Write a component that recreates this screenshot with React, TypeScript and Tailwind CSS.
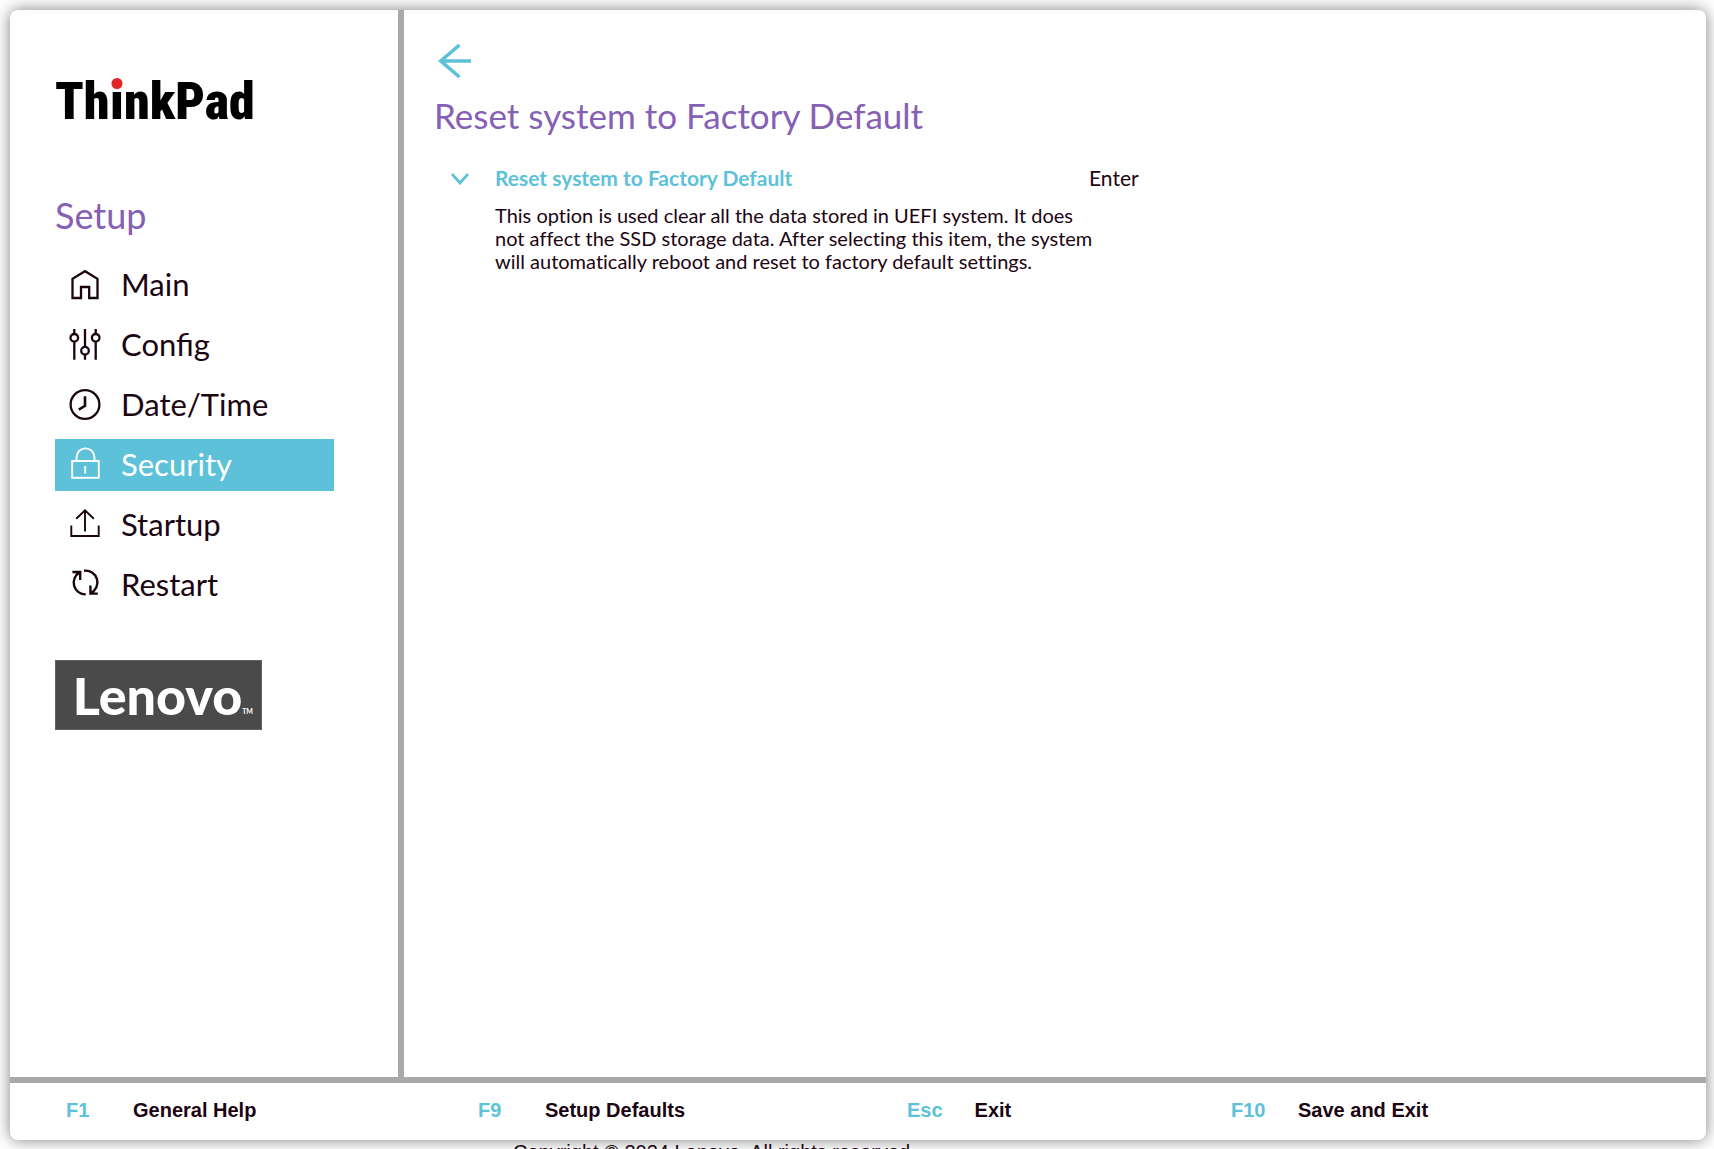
import type { ReactNode } from "react";

type NavItem = { label: string; icon: ReactNode; active?: boolean };

function Icon({ children, width = 2.3 }: { children: ReactNode; width?: number }) {
  return (
    <svg
      viewBox="0 0 32 32"
      className="mt-0.5 size-8 shrink-0 overflow-visible"
      fill="none"
      stroke="currentColor"
      strokeWidth={width}
      aria-hidden="true"
    >
      {children}
    </svg>
  );
}

const navItems: NavItem[] = [
  {
    label: "Main",
    icon: (
      <Icon>
        <path d="M3.5 29V9.8L16 2.2L28.5 9.8V29H20.2V18H12V29Z" />
      </Icon>
    ),
  },
  {
    label: "Config",
    icon: (
      <Icon>
        <path d="M5.3 0V5M5.3 12.6V30.7M16 0V17.8M16 25.6V30.7M26.7 0V5M26.7 12.6V30.7" />
        <circle cx="5.3" cy="8.8" r="3.8" />
        <circle cx="16" cy="21.7" r="3.8" />
        <circle cx="26.7" cy="8.8" r="3.8" />
      </Icon>
    ),
  },
  {
    label: "Date/Time",
    icon: (
      <Icon>
        <circle cx="16" cy="15.5" r="14.4" />
        <path d="M16 7.2V16.8L9.8 20.6" strokeWidth="2.6" />
      </Icon>
    ),
  },
  {
    label: "Security",
    active: true,
    icon: (
      <Icon width={1.9}>
        <rect x="3.2" y="12" width="26.6" height="16.8" />
        <path d="M7.5 12V8.4A9 9 0 0 1 25.5 8.4V12M16.2 17V24.5" />
      </Icon>
    ),
  },
  {
    label: "Startup",
    icon: (
      <Icon width={1.9}>
        <path d="M2.3 16.4V27H29.7V16.4M16 22.5V1.8M7.2 9.8L16 1.4L24.8 9.8" />
      </Icon>
    ),
  },
  {
    label: "Restart",
    icon: (
      <Icon width={2.4}>
        <path d="M3.4 3H11.2V11M10.6 3.4A11.8 11.8 0 0 0 16.8 25.4" />
        <path d="M28.8 24.6H21.4V16.6M15 1.8A11.8 11.8 0 0 1 21.6 24.2" />
      </Icon>
    ),
  },
];

const shortcuts = [
  { key: "F1", label: "General Help" },
  { key: "F9", label: "Setup Defaults" },
  { key: "Esc", label: "Exit" },
  { key: "F10", label: "Save and Exit" },
];

function ThinkPadLogo() {
  return (
    <div className="flex h-16 items-center pt-2 font-['Roboto_Condensed','Roboto',sans-serif] text-[52px] leading-none font-black text-black">
      <span>Th</span>
      <span className="relative">
        ı
        <span className="absolute top-0.5 left-1/2 size-[11px] -translate-x-1/2 rounded-full bg-[#e22526]" />
      </span>
      <span>nkPad</span>
    </div>
  );
}

function LenovoLogo() {
  return (
    <div className="flex h-[70px] w-[207px] items-center justify-end border border-[#616161] bg-[#4a4a4a] pr-2 font-['Lato',sans-serif] text-white">
      <span className="text-[52px] leading-none font-black">Lenovo</span>
      <span className="mt-8 text-[7px] leading-none font-bold">TM</span>
    </div>
  );
}

function Sidebar() {
  return (
    <aside className="w-[394px] shrink-0 border-r-6 border-[#a9a9a9] pt-14 pr-16 pl-[45px]">
      <ThinkPadLogo />
      <h1 className="mt-[61px] text-[36px] leading-[48px] text-[#8560b4]">Setup</h1>
      <nav className="mt-5 flex flex-col gap-2" aria-label="Setup">
        {navItems.map((item) => (
          <button
            key={item.label}
            type="button"
            aria-current={item.active ? "page" : undefined}
            className={
              item.active
                ? "flex h-[52px] items-center gap-5 bg-[#5ec1da] px-3.5 pb-0.5 text-left text-[31px] text-white"
                : "flex h-[52px] items-center gap-5 px-3.5 pb-0.5 text-left text-[31px]"
            }
          >
            {item.icon}
            {item.label}
          </button>
        ))}
      </nav>
      <div className="mt-[49px]">
        <LenovoLogo />
      </div>
    </aside>
  );
}

function Content() {
  return (
    <main className="min-w-0 flex-1 pt-[34px] pr-8 pl-[30px]">
      <button type="button" aria-label="Back" className="block px-1 text-[#5ec1da]">
        <svg viewBox="0 0 34 34" className="size-[34px]" fill="none" stroke="currentColor" strokeWidth="3.6">
          <path d="M33 17H3M21.5 1L2.8 17L21.5 33" />
        </svg>
      </button>
      <h2 className="mt-3.5 text-[35px] leading-[46px] text-[#8560b4]">Reset system to Factory Default</h2>
      <div className="mt-[26px] grid grid-cols-[61px_594px_1fr] text-[21px] leading-7">
        <button type="button" aria-label="Collapse" className="flex h-7 items-center pt-0.5 pl-[17px] text-[#5ec1da]">
          <svg viewBox="0 0 18 12" className="h-3 w-[18px]" fill="none" stroke="currentColor" strokeWidth="2.8">
            <path d="M1 1L9 10L17 1" />
          </svg>
        </button>
        <h3 className="font-bold text-[#5ec1da]">Reset system to Factory Default</h3>
        <button type="button" className="text-left leading-6">
          Enter
        </button>
        <p className="col-span-2 col-start-2 mt-3 max-w-[608px] text-[20px] leading-[23px] [font-variant-ligatures:none]">
          This option is used clear all the data stored in UEFI system. It does not affect the SSD storage data. After
          selecting this item, the system will automatically reboot and reset to factory default settings.
        </p>
      </div>
    </main>
  );
}

export default function App() {
  return (
    <div className="h-screen overflow-hidden bg-white px-2 pt-2.5 font-['Lato',sans-serif] text-[#1c0512]">
      <div className="ml-0.5 flex h-[calc(100vh-19px)] flex-col overflow-hidden rounded-lg bg-white shadow-[0_0_16px_rgba(0,0,0,0.5)]">
        <div className="flex min-h-0 flex-1">
          <Sidebar />
          <Content />
        </div>
        <footer className="grid h-[63px] shrink-0 grid-cols-[412px_429px_324px_1fr] items-center border-t-6 border-[#a9a9a9] pb-1 pl-14 font-['Liberation_Sans',sans-serif] text-[20px] font-bold">
          {shortcuts.map((s) => (
            <button key={s.key} type="button" className="flex items-center text-left">
              <span className="min-w-[67px] pr-8 text-[#5ec1da]">{s.key}</span>
              <span>{s.label}</span>
            </button>
          ))}
        </footer>
      </div>
      <p className="pl-[505px] font-['Liberation_Sans',sans-serif] text-[20px] leading-6">
        Copyright © 2024 Lenovo. All rights reserved
      </p>
    </div>
  );
}
